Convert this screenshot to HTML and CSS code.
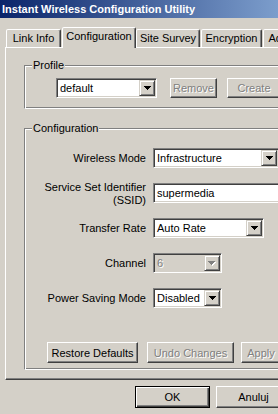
FILE: index.html
```html
<!DOCTYPE html>
<html>
<head>
<meta charset="utf-8">
<link rel="stylesheet" href="styles.css">
</head>
<body>
<div class="window">
  <div class="titlebar">Instant Wireless Configuration Utility</div>
  <div class="tabs">
    <div class="tab t-link">Link Info</div>
    <div class="tab active">Configuration</div>
    <div class="tab t-site">Site Survey</div>
    <div class="tab t-enc">Encryption</div>
    <div class="tab t-adv">Advanced</div>
  </div>
  <div class="panel">
    <fieldset class="group">
      <legend>Profile</legend>
      <div class="profile-row">
        <div class="combo w-profile">
          <span class="combo-text">default</span>
          <span class="drop"><svg width="7" height="4" viewBox="0 0 7 4" shape-rendering="crispEdges"><path d="M0 0H7V1H6V2H5V3H4V4H3V3H2V2H1V1H0Z" fill="#000"/></svg></span>
        </div>
        <button class="btn disabled w-remove">Remove</button>
        <button class="btn disabled w-create">Create</button>
      </div>
    </fieldset>
    <fieldset class="group config">
      <legend>Configuration</legend>
      <div class="config-body">
        <div class="form">
          <label class="lbl">Wireless Mode</label>
          <div class="combo w-mode">
            <span class="combo-text">Infrastructure</span>
            <span class="drop"><svg width="7" height="4" viewBox="0 0 7 4" shape-rendering="crispEdges"><path d="M0 0H7V1H6V2H5V3H4V4H3V3H2V2H1V1H0Z" fill="#000"/></svg></span>
          </div>
          <label class="lbl lbl-two">Service Set Identifier<br>(SSID)</label>
          <div class="textbox w-ssid"><span class="combo-text">supermedia</span></div>
          <label class="lbl">Transfer Rate</label>
          <div class="combo w-rate">
            <span class="combo-text">Auto Rate</span>
            <span class="drop"><svg width="7" height="4" viewBox="0 0 7 4" shape-rendering="crispEdges"><path d="M0 0H7V1H6V2H5V3H4V4H3V3H2V2H1V1H0Z" fill="#000"/></svg></span>
          </div>
          <label class="lbl">Channel</label>
          <div class="combo combo-disabled w-small">
            <span class="combo-text">6</span>
            <span class="drop"><svg width="8" height="5" viewBox="0 0 8 5" shape-rendering="crispEdges"><path d="M1 1H8V2H7V3H6V4H5V5H4V4H3V3H2V2H1Z" fill="#fff"/><path d="M0 0H7V1H6V2H5V3H4V4H3V3H2V2H1V1H0Z" fill="#808080"/></svg></span>
          </div>
          <label class="lbl">Power Saving Mode</label>
          <div class="combo w-small">
            <span class="combo-text">Disabled</span>
            <span class="drop"><svg width="7" height="4" viewBox="0 0 7 4" shape-rendering="crispEdges"><path d="M0 0H7V1H6V2H5V3H4V4H3V3H2V2H1V1H0Z" fill="#000"/></svg></span>
          </div>
        </div>
        <div class="actions">
          <button class="btn w-restore">Restore Defaults</button>
          <button class="btn disabled w-undo">Undo Changes</button>
          <button class="btn disabled w-apply">Apply</button>
        </div>
      </div>
    </fieldset>
  </div>
  <div class="footer">
    <button class="btn btn-default w-dlg">OK</button>
    <button class="btn w-dlg">Anuluj</button>
  </div>
</div>
</body>
</html>
```
FILE: styles.css
```css
html, body {
  margin: 0;
  width: 278px;
  height: 414px;
  overflow: hidden;
  background: #d4d0c8;
}
body {
  font: 11px "Liberation Sans", Arial, sans-serif;
  color: #000;
}
.window {
  width: 380px;
}
.titlebar {
  height: 18px;
  line-height: 18px;
  padding-left: 2px;
  background: linear-gradient(to right, #0a246a, #a6caf0);
  color: #fff;
  font-weight: bold;
  white-space: nowrap;
}
.tabs {
  display: flex;
  align-items: flex-end;
  height: 20px;
  margin: 9px 0 0 6px;
  position: relative;
  z-index: 1;
}
.tab {
  box-sizing: border-box;
  flex: none;
  height: 18px;
  line-height: 16px;
  padding: 0;
  margin-right: 1px;
  text-align: center;
  border: 1px solid;
  border-bottom: 0;
  border-color: #fff #404040 transparent #fff;
  border-radius: 2px 2px 0 0;
  box-shadow: inset -1px 0 #808080;
  white-space: nowrap;
  overflow: hidden;
  background: #d4d0c8;
}
.t-link { width: 55px; }
.t-site { width: 64px; }
.t-enc { width: 61px; }
.t-adv { width: 60px; }
.tab.active {
  width: 74px;
  height: 21px;
  line-height: 17px;
  margin: 0 0 -1px 0;
}
.panel {
  margin-left: 5px;
  padding: 11px 0 9px 18px;
  border: 1px solid;
  border-color: #fff #404040 #404040 #fff;
  box-shadow: inset -1px -1px #808080;
}
.group {
  margin: 0 20px 0 0;
  padding: 0;
  border: 1px solid;
  border-color: #808080 #fff #fff #808080;
  box-shadow: inset 1px 1px #fff, inset -1px -1px #808080;
}
.group legend {
  margin-left: 7px;
  padding: 0 1px;
  line-height: 13px;
  background: #d4d0c8;
}
.config {
  margin-top: 13px;
}
.profile-row {
  display: flex;
  align-items: center;
  padding: 6px 0 10px 31px;
}
.combo, .textbox {
  box-sizing: border-box;
  height: 20px;
  padding: 1px;
  display: flex;
  align-items: center;
  justify-content: space-between;
  border: 1px solid;
  border-color: #808080 #fff #fff #808080;
  box-shadow: inset 1px 1px #404040, inset -1px -1px #d4d0c8;
  background: #fff;
  white-space: nowrap;
}
.combo-text {
  padding-left: 2px;
}
.combo-disabled {
  background: #d4d0c8;
}
.combo-disabled .combo-text {
  color: #808080;
  text-shadow: 1px 1px #fff;
}
.drop {
  box-sizing: border-box;
  width: 16px;
  height: 16px;
  display: flex;
  align-items: center;
  justify-content: center;
  background: #d4d0c8;
  border: 1px solid;
  border-color: #d4d0c8 #404040 #404040 #d4d0c8;
  box-shadow: inset 1px 1px #fff, inset -1px -1px #808080;
}
.btn {
  box-sizing: border-box;
  height: 20px;
  padding: 0;
  font: inherit;
  color: #000;
  background: #d4d0c8;
  border: 1px solid;
  border-color: #fff #404040 #404040 #fff;
  box-shadow: inset -1px -1px #808080;
  white-space: nowrap;
}
.btn.disabled {
  color: #808080;
  text-shadow: 1px 1px #fff;
}
.w-profile { width: 101px; }
.w-remove { width: 47px; margin-left: 13px; }
.w-create { width: 54px; margin-left: 10px; }
.config-body {
  padding: 13px 0 6px 0;
}
.form {
  display: grid;
  grid-template-columns: 121px auto;
  column-gap: 7px;
  row-gap: 15px;
  align-items: center;
  justify-items: start;
}
.lbl {
  justify-self: end;
  text-align: right;
  line-height: 13px;
  white-space: nowrap;
}
.lbl-two {
  align-self: start;
  margin: -2px 0 -4px;
}
.w-mode { width: 126px; }
.w-ssid { width: 160px; }
.w-rate { width: 111px; }
.w-small { width: 69px; }
.actions {
  display: flex;
  padding-left: 22px;
  margin-top: 34px;
}
.actions .btn { height: 21px; }
.w-restore { width: 91px; }
.w-undo { width: 87px; margin-left: 9px; }
.w-apply { width: 40px; margin-left: 7px; }
.footer {
  display: flex;
  gap: 6px;
  padding: 6px 0 0 135px;
}
.w-dlg { width: 75px; height: 22px; }
.btn-default {
  border: 1px solid #000;
  box-shadow: inset 1px 1px #fff, inset -1px -1px #404040, inset -2px -2px #808080;
}
```
